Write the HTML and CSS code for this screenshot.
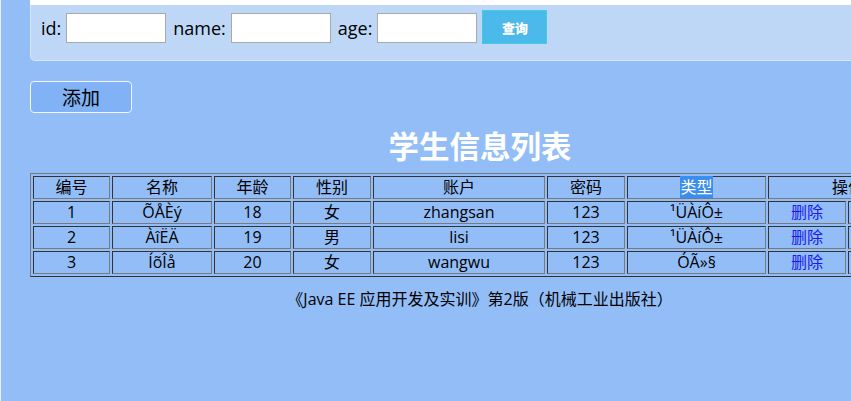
FILE: index.html
```html
<!DOCTYPE html>
<html lang="zh">
<head>
<meta charset="utf-8">
<title>学生信息列表</title>
<link rel="stylesheet" href="styles.css">
</head>
<body>
<div class="page">
  <div class="topgap"></div>
  <form class="search">
    <label class="lbl">id:</label><input class="field" type="text">
    <label class="lbl gap">name:</label><input class="field" type="text">
    <label class="lbl gap">age:</label><input class="field" type="text">
    <button class="query" type="button">查询</button>
  </form>
  <button class="add" type="button">添加</button>
  <h2 class="title">学生信息列表</h2>
  <table class="list">
    <tr>
      <td class="w1">编号</td>
      <td class="w2">名称</td>
      <td class="w3">年龄</td>
      <td class="w4">性别</td>
      <td class="w5">账户</td>
      <td class="w6">密码</td>
      <td class="w7"><span class="sel">类型</span></td>
      <td colspan="2">操作</td>
    </tr>
    <tr>
      <td>1</td><td>ÕÅÈý</td><td>18</td><td>女</td><td>zhangsan</td><td>123</td><td>¹ÜÀíÔ±</td>
      <td class="w8"><a class="op" href="#">删除</a></td><td class="w9"><a class="op" href="#">修改</a></td>
    </tr>
    <tr>
      <td>2</td><td>ÀîËÄ</td><td>19</td><td>男</td><td>lisi</td><td>123</td><td>¹ÜÀíÔ±</td>
      <td><a class="op" href="#">删除</a></td><td><a class="op" href="#">修改</a></td>
    </tr>
    <tr>
      <td>3</td><td>ÍõÎå</td><td>20</td><td>女</td><td>wangwu</td><td>123</td><td>ÓÃ»§</td>
      <td><a class="op" href="#">删除</a></td><td><a class="op" href="#">修改</a></td>
    </tr>
  </table>
  <p class="foot">《Java EE 应用开发及实训》第2版（机械工业出版社）</p>
</div>
</body>
</html>
```
FILE: styles.css
```css
html {
  overflow: hidden;
}
body {
  margin: 0;
  min-height: 401px;
  background: #93bdf7;
  border-left: 1px solid #e6effd;
  font-family: "Open Sans", "Noto Sans CJK SC", sans-serif;
  color: #000;
}
.page {
  margin-left: 29px;
  width: 1000px;
}
.topgap {
  height: 5px;
  background: #ffffff;
}
.search {
  display: flex;
  align-items: flex-start;
  box-sizing: border-box;
  height: 56px;
  padding: 5px 0 0 10px;
  margin: 0;
  background: #bed7f7;
  border-left: 1px solid #d3e4fb;
  border-bottom: 1px solid #dce9fb;
  border-bottom-left-radius: 5px;
}
.lbl {
  font-size: 18px;
  line-height: 30px;
  margin-top: 3px;
  margin-right: 5px;
}
.lbl.gap {
  margin-left: 7px;
}
.field {
  width: 100px;
  height: 30px;
  margin: 3px 0 0 0;
  padding: 0;
  box-sizing: border-box;
  border: 1px solid #a9a9a9;
  background: #fff;
}
.query {
  width: 65px;
  height: 34px;
  margin-left: 5px;
  padding: 0;
  box-sizing: border-box;
  background: #4cb9eb;
  border: 1px solid #3fcde2;
  color: #fff;
  font-family: "Noto Sans CJK SC", sans-serif;
  font-weight: 900;
  font-size: 13px;
}
.add {
  display: block;
  margin: 20px 0 0 0;
  width: 102px;
  height: 32px;
  padding: 0;
  box-sizing: border-box;
  background: #80b2f5;
  border: 1px solid #f2f7ff;
  border-radius: 4px;
  font-family: "Noto Sans CJK SC", sans-serif;
  font-size: 19px;
  line-height: 28px;
  color: #000;
}
.title {
  width: 900px;
  margin: 12px 0 8px 0;
  text-align: center;
  font-family: "Noto Sans CJK SC", sans-serif;
  font-size: 30.5px;
  font-weight: bold;
  line-height: 40px;
  color: #fff;
}
.list {
  border-collapse: separate;
  border-spacing: 2px;
  border: 1px solid;
  border-color: #7a7a7a #333 #333 #7a7a7a;
  font-size: 16px;
}
.list td {
  height: 21px;
  padding: 0;
  line-height: 21px;
  text-align: center;
  border: 1px solid;
  border-color: #333 #7a7a7a #7a7a7a #333;
  white-space: nowrap;
}
.w1 { width: 75px; }
.w2 { width: 98px; }
.w3 { width: 75px; }
.w4 { width: 76px; }
.w5 { width: 170px; }
.w6 { width: 76px; }
.w7 { width: 137px; }
.w8 { width: 76px; }
.w9 { width: 78px; }
.sel {
  background: #3a8ef0;
  color: #fff;
}
.op {
  color: #1a1aee;
  text-decoration: none;
}
.foot {
  width: 900px;
  margin: 12px 0 0 0;
  text-align: center;
  font-size: 16px;
  line-height: 20px;
}
```
